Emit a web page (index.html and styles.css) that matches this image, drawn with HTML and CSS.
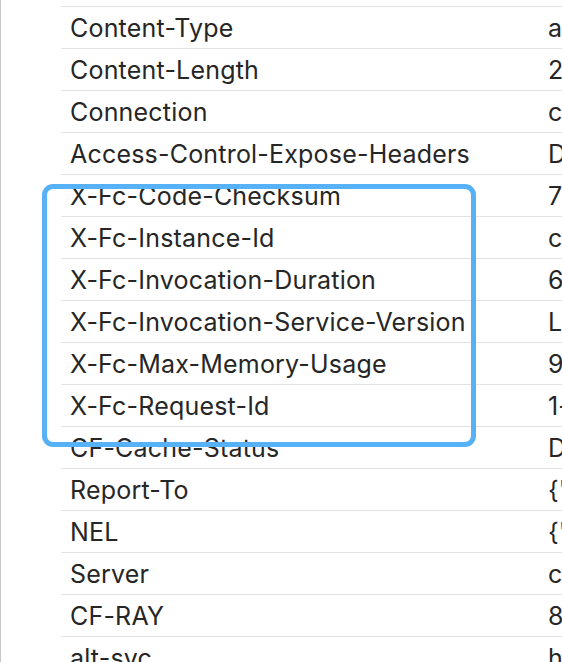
FILE: index.html
```html
<!DOCTYPE html>
<html>
<head>
<meta charset="utf-8">
<link rel="stylesheet" href="styles.css">
</head>
<body>
<div class="panel">
  <div class="table">
    <div class="row spacer"><div class="k"></div><div class="v"></div></div>
    <div class="row"><div class="k">Content-Type</div><div class="v">application/json</div></div>
    <div class="row"><div class="k">Content-Length</div><div class="v">2415</div></div>
    <div class="row"><div class="k">Connection</div><div class="v">close</div></div>
    <div class="row"><div class="k">Access-Control-Expose-Headers</div><div class="v">Date,x-fc-request-id</div></div>
    <div class="row"><div class="k">X-Fc-Code-Checksum</div><div class="v">7345120983</div></div>
    <div class="row"><div class="k">X-Fc-Instance-Id</div><div class="v">c-65a3f2e1</div></div>
    <div class="row"><div class="k">X-Fc-Invocation-Duration</div><div class="v">64</div></div>
    <div class="row"><div class="k">X-Fc-Invocation-Service-Version</div><div class="v">LATEST</div></div>
    <div class="row"><div class="k">X-Fc-Max-Memory-Usage</div><div class="v">92.5</div></div>
    <div class="row"><div class="k">X-Fc-Request-Id</div><div class="v">1-65a3f2e1</div></div>
    <div class="row"><div class="k">CF-Cache-Status</div><div class="v">DYNAMIC</div></div>
    <div class="row"><div class="k">Report-To</div><div class="v">{"endpoints":[]}</div></div>
    <div class="row"><div class="k">NEL</div><div class="v">{"success_fraction":0}</div></div>
    <div class="row"><div class="k">Server</div><div class="v">cloudflare</div></div>
    <div class="row"><div class="k">CF-RAY</div><div class="v">84a1b2c3d4</div></div>
    <div class="row"><div class="k">alt-svc</div><div class="v">h3=":443"</div></div>
  </div>
  <div class="highlight"></div>
</div>
</body>
</html>
```

FILE: styles.css
```css
html, body {
  margin: 0;
  padding: 0;
  background: #ffffff;
  overflow: hidden;
  width: 562px;
  height: 662px;
}
.panel {
  position: relative;
  height: 662px;
  border-left: 1px solid #c8c8c8;
  padding-left: 60px;
  overflow: hidden;
  font-family: "Inter", "Liberation Sans", sans-serif;
  font-size: 25px;
  letter-spacing: 0.2px;
  color: #262626;
}
.table {
  width: 900px;
  margin-top: -35px;
}
.row {
  display: grid;
  grid-template-columns: 478px 1fr;
  height: 41px;
  border-bottom: 1px solid #e3e3e3;
  align-items: center;
}
.k, .v {
  padding-left: 9px;
  padding-top: 2px;
  white-space: nowrap;
  line-height: 1;
}
.highlight {
  position: absolute;
  left: 41px;
  top: 184px;
  width: 424px;
  height: 253px;
  border: 5px solid #56b1f6;
  border-radius: 11px;
}
```
